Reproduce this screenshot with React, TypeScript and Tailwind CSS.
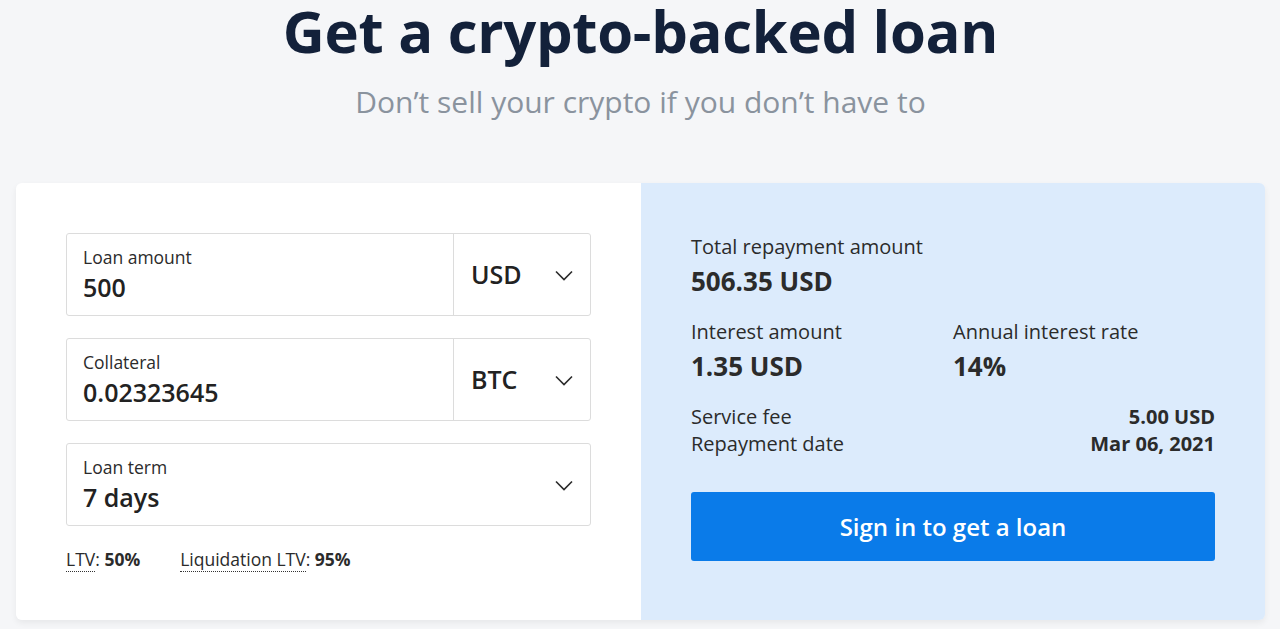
import React from "react";

function Chevron() {
  return (
    <svg width="20" height="20" viewBox="0 0 20 20" fill="none" stroke="#2a2a2a" strokeWidth="1.6">
      <path d="M2 6.5l8 8 8-8" />
    </svg>
  );
}

function Field({ label, value, unit }: { label: string; value: string; unit?: string }) {
  return (
    <div className="flex h-[83px] rounded-[3px] border border-[#dcdcdc] bg-white">
      <div className="flex flex-1 flex-col pl-[16px] pt-[12px]">
        <div className="text-[17.5px] leading-[23px] text-[#2b2b2b]">{label}</div>
        <div className="mt-[1px] text-[25px] leading-[34px] font-semibold text-[#222]">{value}</div>
      </div>
      {unit ? (
        <div className="flex w-[137px] items-center justify-between border-l border-[#dcdcdc] pl-[17px] pr-[16px]">
          <span className="text-[25px] font-semibold text-[#222]">{unit}</span>
          <Chevron />
        </div>
      ) : (
        <div className="flex items-center pr-[16px]">
          <Chevron />
        </div>
      )}
    </div>
  );
}

export default function App() {
  return (
    <div
      className="min-h-[629px] bg-[#f5f6f8] pl-[16px] pr-[15px] pb-[10px]"
      style={{ fontFamily: '"Open Sans", sans-serif' }}
    >
      <div className="flex flex-col items-center">
        <h1 className="text-[58px] leading-[62px] font-bold text-[#13213a] tracking-[-0.3px]">
          Get a crypto-backed loan
        </h1>
        <p className="mt-[20px] text-[30px] leading-[40px] text-[#8a939e]">
          Don’t sell your crypto if you don’t have to
        </p>
      </div>
      <div className="mt-[61px] flex h-[437px] overflow-hidden rounded-[6px] shadow-[0_3px_6px_rgba(0,0,0,0.06)]">
        <div className="flex w-[625px] flex-col gap-[22px] bg-white px-[50px] pt-[50px]">
          <Field label="Loan amount" value="500" unit="USD" />
          <Field label="Collateral" value="0.02323645" unit="BTC" />
          <Field label="Loan term" value="7 days" />
          <div className="mt-[-1px] flex gap-[40px] text-[17.5px] leading-[24px] text-[#2b2b2b]">
            <span>
              <span className="border-b border-dotted border-[#333]">LTV</span>:{" "}
              <span className="font-bold">50%</span>
            </span>
            <span>
              <span className="border-b border-dotted border-[#333]">Liquidation LTV</span>:{" "}
              <span className="font-bold">95%</span>
            </span>
          </div>
        </div>
        <div className="flex flex-1 flex-col bg-[#dcebfc] px-[50px] pt-[50px] text-[#2b2b2b]">
          <div className="text-[20px] leading-[27px]">Total repayment amount</div>
          <div className="mt-[4px] text-[26px] leading-[34px] font-bold">506.35 USD</div>
          <div className="mt-[20px] flex">
            <div className="w-[262px]">
              <div className="text-[20px] leading-[27px]">Interest amount</div>
              <div className="mt-[4px] text-[26px] leading-[34px] font-bold">1.35 USD</div>
            </div>
            <div>
              <div className="text-[20px] leading-[27px]">Annual interest rate</div>
              <div className="mt-[4px] text-[26px] leading-[34px] font-bold">14%</div>
            </div>
          </div>
          <div className="mt-[20px] flex justify-between text-[20px] leading-[27px]">
            <span>Service fee</span>
            <span className="font-bold">5.00 USD</span>
          </div>
          <div className="flex justify-between text-[20px] leading-[27px]">
            <span>Repayment date</span>
            <span className="font-bold">Mar 06, 2021</span>
          </div>
          <button className="mt-[35px] h-[69px] rounded-[3px] bg-[#0a7be9] text-[24px] font-semibold text-white">
            Sign in to get a loan
          </button>
        </div>
      </div>
    </div>
  );
}
